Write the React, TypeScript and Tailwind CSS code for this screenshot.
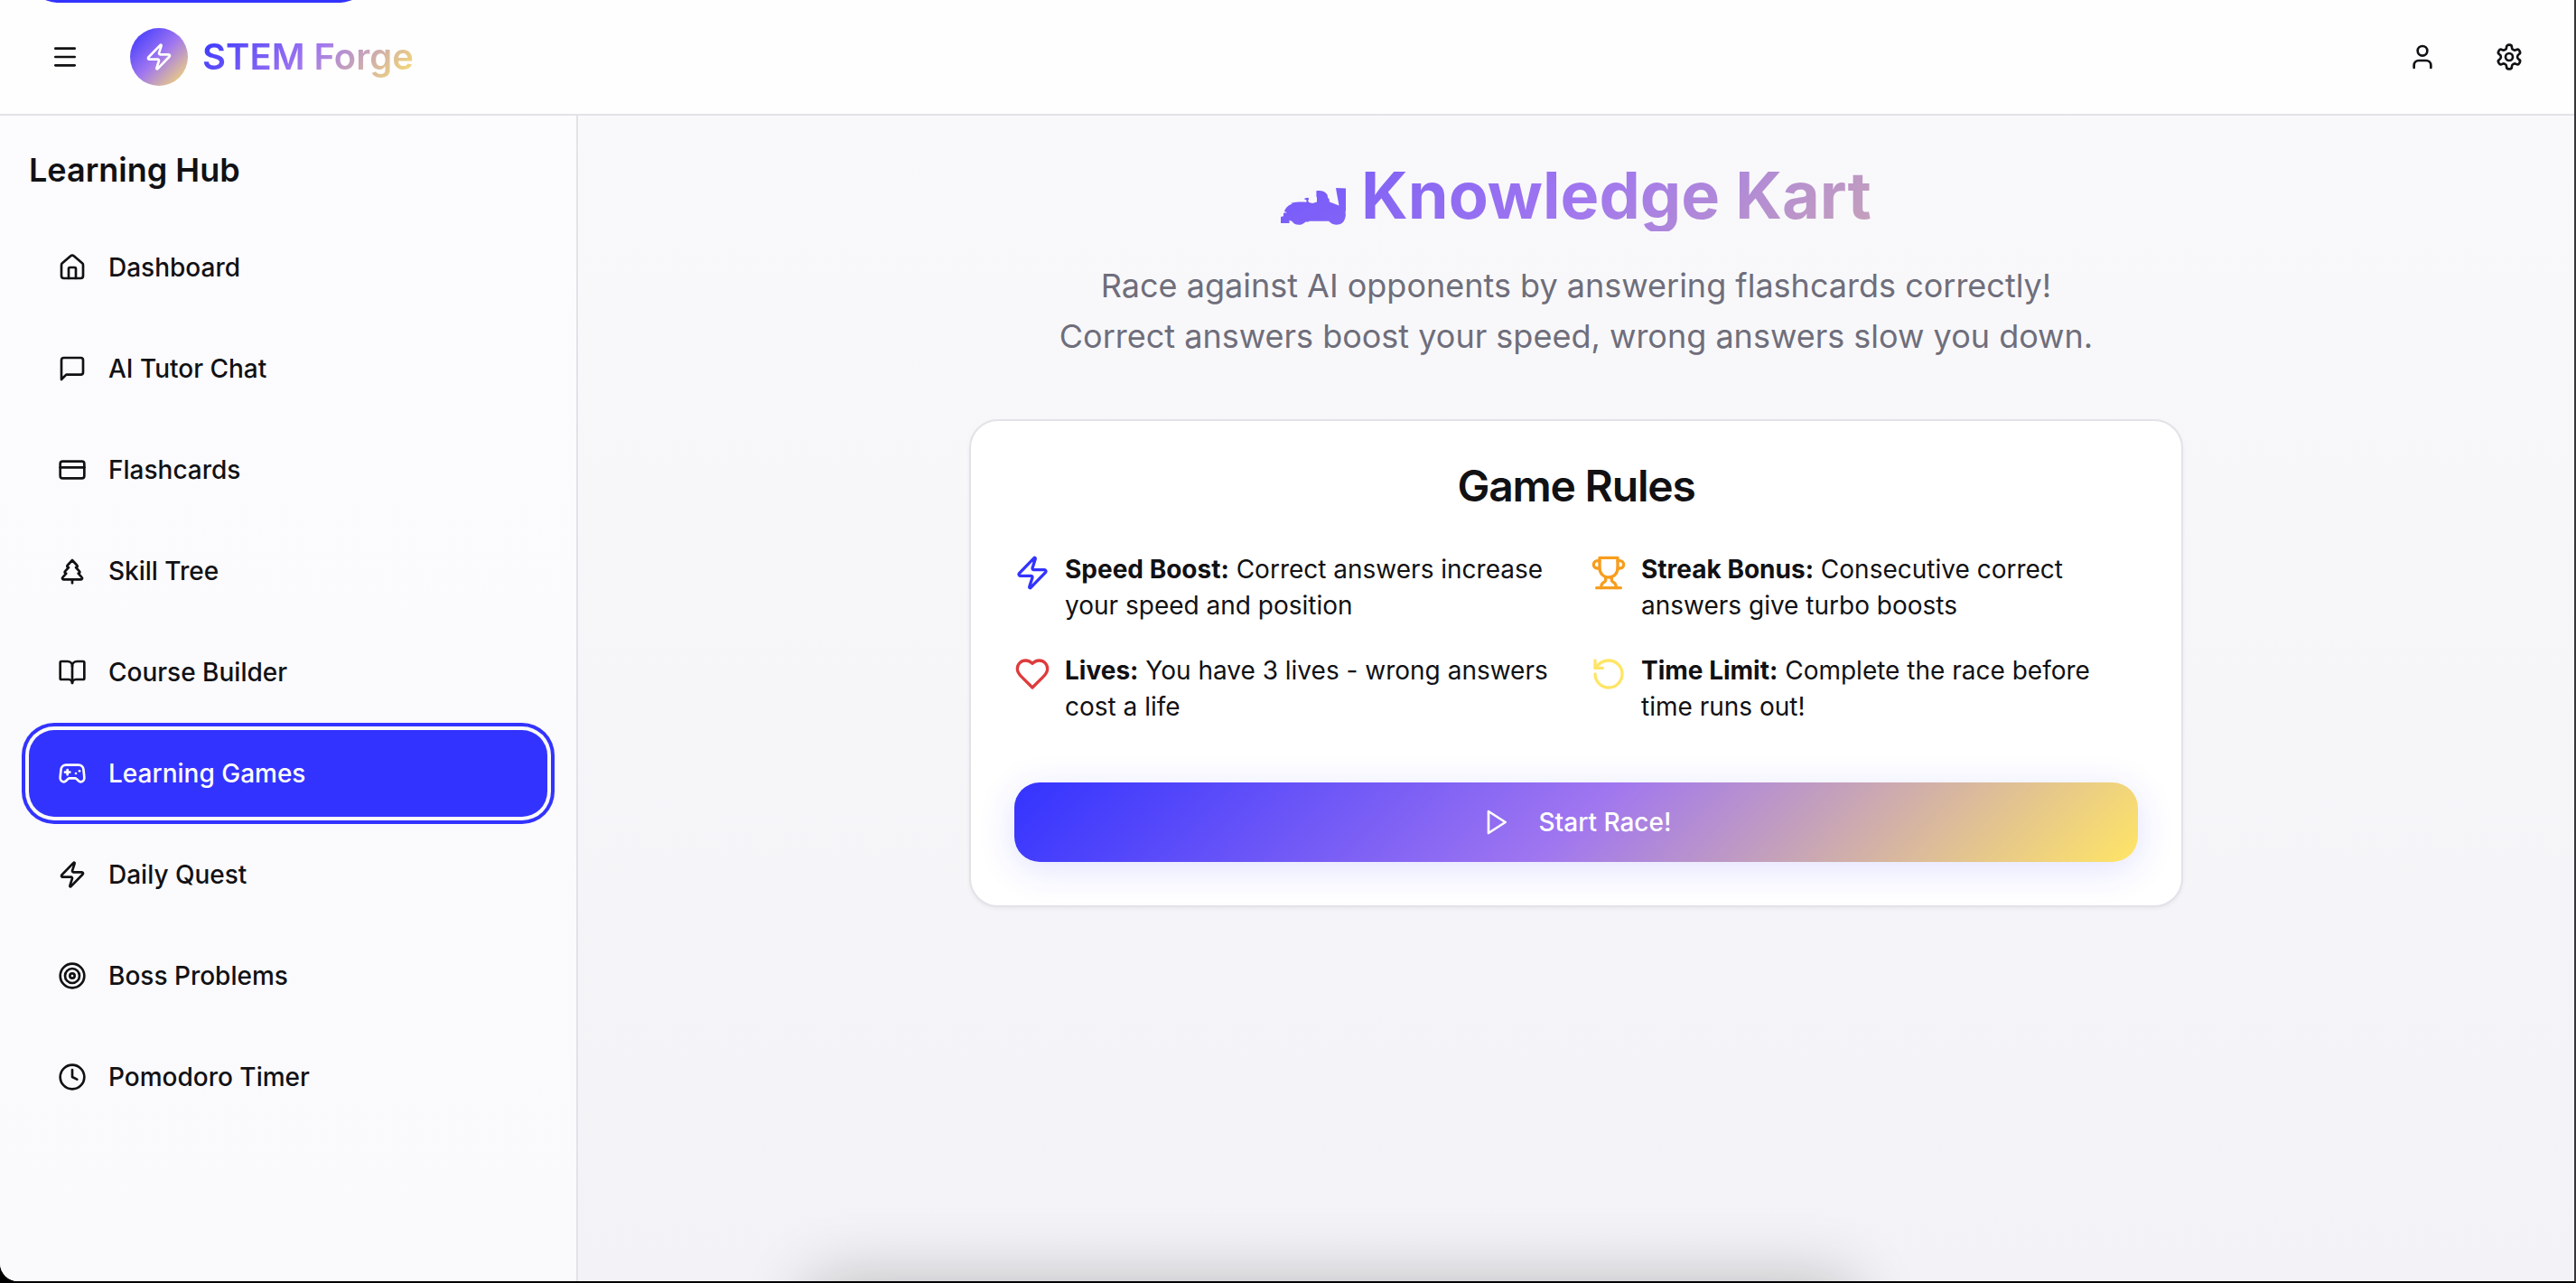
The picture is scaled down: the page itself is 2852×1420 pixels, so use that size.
import type { ReactNode } from 'react';
import {
  BookOpen,
  Clock,
  CreditCard,
  Gamepad2,
  House,
  Menu,
  RotateCcw,
  Target,
  TreePine,
  User,
  Zap,
} from 'lucide-react';
import clsx from 'clsx';

type IconProps = { className?: string };

const StrokeIcon = ({ className, children }: IconProps & { children: ReactNode }) => (
  <svg
    viewBox="0 0 24 24"
    fill="none"
    stroke="currentColor"
    strokeWidth={2}
    strokeLinecap="round"
    strokeLinejoin="round"
    className={className}
  >
    {children}
  </svg>
);

const ChatIcon = ({ className }: IconProps) => (
  <StrokeIcon className={className}>
    <path d="M21 15a2 2 0 0 1-2 2H7l-4 4V5a2 2 0 0 1 2-2h14a2 2 0 0 1 2 2z" />
  </StrokeIcon>
);

const SettingsIcon = ({ className }: IconProps) => (
  <StrokeIcon className={className}>
    <path d="M12.22 2h-.44a2 2 0 0 0-2 2v.18a2 2 0 0 1-1 1.73l-.43.25a2 2 0 0 1-2 0l-.15-.08a2 2 0 0 0-2.73.73l-.22.38a2 2 0 0 0 .73 2.73l.15.1a2 2 0 0 1 1 1.72v.51a2 2 0 0 1-1 1.74l-.15.09a2 2 0 0 0-.73 2.73l.22.38a2 2 0 0 0 2.73.73l.15-.08a2 2 0 0 1 2 0l.43.25a2 2 0 0 1 1 1.73V20a2 2 0 0 0 2 2h.44a2 2 0 0 0 2-2v-.18a2 2 0 0 1 1-1.73l.43-.25a2 2 0 0 1 2 0l.15.08a2 2 0 0 0 2.73-.73l.22-.39a2 2 0 0 0-.73-2.73l-.15-.08a2 2 0 0 1-1-1.74v-.5a2 2 0 0 1 1-1.74l.15-.09a2 2 0 0 0 .73-2.73l-.22-.38a2 2 0 0 0-2.73-.73l-.15.08a2 2 0 0 1-2 0l-.43-.25a2 2 0 0 1-1-1.73V4a2 2 0 0 0-2-2z" />
    <circle cx="12" cy="12" r="3" />
  </StrokeIcon>
);

const HeartIcon = ({ className }: IconProps) => (
  <StrokeIcon className={className}>
    <path d="M19 14c1.49-1.46 3-3.21 3-5.5A5.5 5.5 0 0 0 16.5 3c-1.76 0-3 .5-4.5 2-1.5-1.5-2.74-2-4.5-2A5.5 5.5 0 0 0 2 8.5c0 2.3 1.5 4.05 3 5.5l7 7Z" />
  </StrokeIcon>
);

const TrophyIcon = ({ className }: IconProps) => (
  <StrokeIcon className={className}>
    <path d="M6 9H4.5a2.5 2.5 0 0 1 0-5H6" />
    <path d="M18 9h1.5a2.5 2.5 0 0 0 0-5H18" />
    <path d="M4 22h16" />
    <path d="M10 14.66V17c0 .55-.47.98-.97 1.21C7.85 18.75 7 20.24 7 22" />
    <path d="M14 14.66V17c0 .55.47.98.97 1.21C16.15 18.75 17 20.24 17 22" />
    <path d="M18 2H6v7a6 6 0 0 0 12 0V2Z" />
  </StrokeIcon>
);

const PlayIcon = ({ className }: IconProps) => (
  <StrokeIcon className={className}>
    <polygon points="6 3 20 12 6 21 6 3" />
  </StrokeIcon>
);

const RaceCar = ({ className }: IconProps) => (
  <svg viewBox="0 0 72 42" className={className}>
    <defs>
      <linearGradient id="car" x1="0" y1="0" x2="1" y2="1">
        <stop offset="0" stopColor="#7759fb" />
        <stop offset="1" stopColor="#8264f7" />
      </linearGradient>
    </defs>
    <path
      fill="url(#car)"
      d="M0 39V32l3-.8V27.800l4-.6-3-1.200C5 22 9 18.500 13 17.500l-2-.7C16 15.600 22 15.400 28 15.700l.8-1.400-.8-1-1.600-.6V11.600l3.600-.8 1.300 1-1.100 2.400 1 1.700 3.800 1L40 15.500V10.500l-.6-.7V3.300C45 2.500 49 4 51.500 7.500l.8 3.800 1.200.7.5 3.500 10.500 3.900L61.200 1.500V0L72 .5V25l-.4 2 .3 3C71.500 35 69 39.500 65 40.300 61 41.300 57 40.500 54 37.500L53 36.700H31.500l-.7.800H27.500C25 40 23 40.800 20 40.800 16 40.800 14 39 12.500 37L9.500 35.800V39Z"
    />
  </svg>
);

const navItems = [
  { label: 'Dashboard', icon: House },
  { label: 'AI Tutor Chat', icon: ChatIcon },
  { label: 'Flashcards', icon: CreditCard },
  { label: 'Skill Tree', icon: TreePine },
  { label: 'Course Builder', icon: BookOpen },
  { label: 'Learning Games', icon: Gamepad2, active: true },
  { label: 'Daily Quest', icon: Zap },
  { label: 'Boss Problems', icon: Target },
  { label: 'Pomodoro Timer', icon: Clock },
];

const rules = [
  {
    title: 'Speed Boost:',
    text: 'Correct answers increase your speed and position',
    icon: Zap,
    color: 'text-[#3333ff]',
  },
  {
    title: 'Streak Bonus:',
    text: 'Consecutive correct answers give turbo boosts',
    icon: TrophyIcon,
    color: 'text-[#f79d1e]',
  },
  {
    title: 'Lives:',
    text: 'You have 3 lives - wrong answers cost a life',
    icon: HeartIcon,
    color: 'text-[#de3b3d]',
  },
  {
    title: 'Time Limit:',
    text: 'Complete the race before time runs out!',
    icon: RotateCcw,
    color: 'text-[#ffe566]',
  },
];

const Header = () => (
  <header className="relative flex h-32 shrink-0 items-center justify-between border-b-2 border-[#e3e2e8] bg-[#fefefe] px-8">
    <div className="absolute -top-[61px] left-[35px] h-16 w-[370px] rounded-[28px] bg-[#3333ff]" />
    <div className="flex items-center gap-8">
      <button className="flex size-20 items-center justify-center">
        <Menu className="size-8" />
      </button>
      <div className="flex items-center gap-4">
        <div className="flex size-16 items-center justify-center rounded-full bg-[linear-gradient(135deg,#3333ff_0%,#a076f0_50%,#ffe566_100%)] text-white">
          <Zap className="size-8" />
        </div>
        <span className="bg-[linear-gradient(135deg,#3333ff_0%,#a076f0_50%,#ffe566_100%)] bg-clip-text text-[40px] leading-[56px] font-semibold text-transparent">
          STEM Forge
        </span>
      </div>
    </div>
    <div className="flex items-center gap-4">
      <button className="flex size-20 items-center justify-center">
        <User className="size-8" />
      </button>
      <button className="flex size-20 items-center justify-center">
        <SettingsIcon className="size-8" />
      </button>
    </div>
  </header>
);

const Sidebar = () => (
  <aside className="w-[640px] shrink-0 border-r-2 border-[#e3e2e8] bg-linear-to-b from-[#fcfbfe] to-[#faf9fc] p-8">
    <h2 className="mb-8 text-4xl leading-[56px] font-semibold">Learning Hub</h2>
    <nav className="flex flex-col gap-4">
      {navItems.map(({ label, icon: Icon, active }) => (
        <a
          key={label}
          className={clsx(
            'flex h-24 items-center gap-6 rounded-[28px] px-8 text-[28px] leading-10 font-medium',
            active && 'bg-[#3333ff] text-white ring-4 ring-[#3333ff] ring-offset-4 ring-offset-[#fafafc]',
          )}
        >
          <Icon className="size-8" />
          {label}
        </a>
      ))}
    </nav>
  </aside>
);

const GameRules = () => (
  <section className="w-[1344px] rounded-[32px] border-2 border-[#e3e2e8] bg-white p-12 shadow-[0_2px_4px_rgba(0,0,0,0.05)]">
    <h3 className="mb-12 text-center text-5xl leading-none font-semibold tracking-tight">Game Rules</h3>
    <div className="grid grid-cols-2 gap-8">
      {rules.map(({ title, text, icon: Icon, color }) => (
        <div key={title} className="flex items-start gap-4">
          <Icon className={clsx('mt-1 size-10 shrink-0', color)} />
          <p className="text-[28px] leading-10">
            <strong className="font-bold">{title}</strong> {text}
          </p>
        </div>
      ))}
    </div>
    <button className="mt-16 flex h-[88px] w-full items-center justify-center gap-8 rounded-[28px] bg-[linear-gradient(135deg,#3333ff_0%,#a076f0_50%,#ffe566_100%)] text-[28px] leading-10 font-medium text-white shadow-[0_8px_40px_rgba(51,51,255,0.15)]">
      <PlayIcon className="size-8" />
      Start Race!
    </button>
  </section>
);

export default function App() {
  return (
    <div className="h-[1420px] w-[2852px] overflow-hidden bg-black font-[Inter,sans-serif] text-[#111114]">
      <div className="flex h-full border-r-2 border-b-2 border-r-[#37373a] border-b-black">
        <div className="flex min-w-0 flex-1 flex-col overflow-hidden rounded-bl-[20px] bg-[#f3f3f6]">
          <Header />
          <div className="flex min-h-0 flex-1">
            <Sidebar />
            <main className="relative flex flex-1 flex-col items-center overflow-hidden bg-linear-to-b from-[#f9f9fb] to-[#f3f3f7] pt-12">
              <h1 className="h-20 w-[1792px] bg-[linear-gradient(135deg,#3333ff_0%,#a076f0_50%,#ffe566_100%)] bg-clip-text text-center text-7xl leading-[80px] font-bold text-transparent">
                <RaceCar className="-mb-2 inline-block w-[72px] align-baseline" /> Knowledge Kart
              </h1>
              <p className="mt-8 text-center text-4xl leading-[56px] text-[#6f6e7b]">
                Race against AI opponents by answering flashcards correctly!
                <br />
                Correct answers boost your speed, wrong answers slow you down.
              </p>
              <div className="mt-16">
                <GameRules />
              </div>
              <div className="absolute -bottom-[200px] left-[256px] h-[200px] w-[1156px] rounded-[20px] shadow-[0_0_74px_rgba(0,0,0,0.24)]" />
            </main>
          </div>
        </div>
      </div>
    </div>
  );
}
